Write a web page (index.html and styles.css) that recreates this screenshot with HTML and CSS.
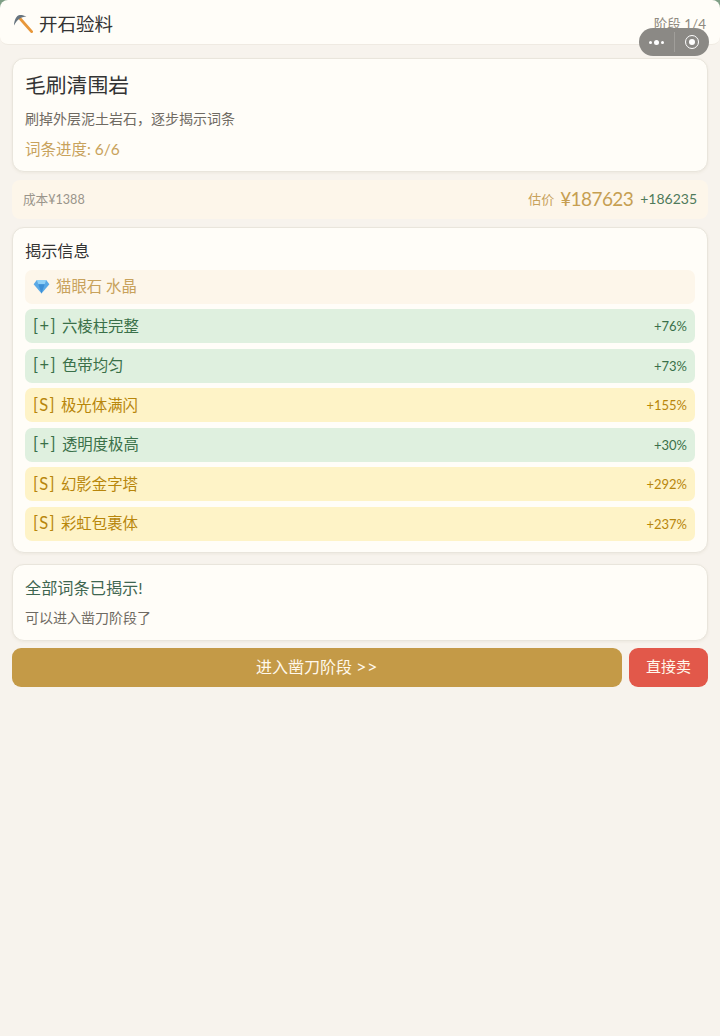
FILE: index.html
```html
<!DOCTYPE html>
<html lang="zh-CN">
<head>
<meta charset="utf-8">
<title>开石验料</title>
<link rel="stylesheet" href="styles.css">
</head>
<body>
<div class="page">
  <header class="topbar">
    <div class="brand">
      <svg class="pick" viewBox="0 0 20 20" aria-hidden="true">
        <path d="M7 5.5 L18.6 18.6" stroke="#e8973a" stroke-width="2.8" stroke-linecap="round" fill="none"/>
        <path d="M1 12.4 C1 7 3.6 2.6 6 2.2 C8.4 1.8 11 2.4 13.4 3.8 C10.6 3.8 8.4 4.4 6.8 5.6 C4.6 7 2.6 9.4 1 12.4 Z" fill="#67747f"/>
      </svg>
      <span>开石验料</span>
    </div>
    <div class="stage">阶段 1/4</div>
  </header>
  <div class="capsule" aria-hidden="true">
    <span class="dots"><i></i><b></b><i></i></span>
    <span class="sep"></span>
    <span class="ring"></span>
  </div>

  <main class="content">
    <section class="card intro">
      <h1>毛刷清围岩</h1>
      <p class="desc">刷掉外层泥土岩石，逐步揭示词条</p>
      <p class="progress">词条进度: 6/6</p>
    </section>

    <section class="pricebar">
      <span class="cost">成本¥1388</span>
      <div class="prices">
        <span class="est-label">估价</span>
        <span class="est">¥187623</span>
        <span class="gain">+186235</span>
      </div>
    </section>

    <section class="card reveal">
      <h2>揭示信息</h2>
      <div class="rows">
        <div class="row base">
          <svg class="gem" viewBox="0 0 18 16" aria-hidden="true">
            <path d="M4 1 H14 L17.4 5.6 L9 15.4 L.6 5.6 Z" fill="#5aa9e6"/>
            <path d="M4 1 H14 L12.4 5.6 H5.6 Z" fill="#8fd0f7"/>
            <path d="M5.6 5.6 H12.4 L9 15.4 Z" fill="#3d8fd6"/>
          </svg>
          <span>猫眼石 水晶</span>
        </div>
        <div class="row plus"><span class="name"><em>[+]</em>六棱柱完整</span><span class="pct">+76%</span></div>
        <div class="row plus"><span class="name"><em>[+]</em>色带均匀</span><span class="pct">+73%</span></div>
        <div class="row rare"><span class="name"><em>[S]</em>极光体满闪</span><span class="pct">+155%</span></div>
        <div class="row plus"><span class="name"><em>[+]</em>透明度极高</span><span class="pct">+30%</span></div>
        <div class="row rare"><span class="name"><em>[S]</em>幻影金字塔</span><span class="pct">+292%</span></div>
        <div class="row rare"><span class="name"><em>[S]</em>彩虹包裹体</span><span class="pct">+237%</span></div>
      </div>
    </section>

    <section class="card done">
      <h3>全部词条已揭示!</h3>
      <p class="desc">可以进入凿刀阶段了</p>
    </section>

    <div class="actions">
      <button class="btn next">进入凿刀阶段 <span class="arrows">&gt;&gt;</span></button>
      <button class="btn sell">直接卖</button>
    </div>
  </main>
</div>
</body>
</html>
```
FILE: styles.css
```css
* { box-sizing: border-box; }
html { background: #f7f3ed; }
body {
  margin: 0;
  font-family: "Lato", "Noto Sans CJK SC", "Noto Sans", sans-serif;
  color: #333;
}
.page {
  position: relative;
  min-height: 1036px;
  background: linear-gradient(#7f9f86 0 12px, #f7f3ed 12px);
}
.topbar {
  height: 45px;
  padding: 2px 8px 0 13px;
  display: flex;
  align-items: center;
  justify-content: space-between;
  background: #fffdf8;
  border-bottom: 1px solid #efeae2;
  border-radius: 8px;
}
.brand {
  display: flex;
  align-items: center;
  gap: 6px;
  font-size: 18.5px;
  color: #333;
}
.pick { width: 20px; height: 20px; display: block; }
.stage {
  font-size: 13.5px;
  color: #8f8a80;
  padding: 0 6px 0 0;
  margin-top: -1px;
}
.capsule {
  position: absolute;
  left: 639px;
  top: 28px;
  width: 70px;
  height: 28px;
  border-radius: 14px;
  background: #8b8985;
  display: flex;
  align-items: center;
}
.dots { width: 35px; display: flex; justify-content: center; align-items: center; gap: 2px; }
.dots i { width: 3px; height: 3px; border-radius: 50%; background: #fff; }
.dots b { width: 5px; height: 5px; border-radius: 50%; background: #fff; }
.sep { width: 1px; height: 20px; background: #a09e9a; }
.ring {
  width: 14px; height: 14px; margin-left: 10px;
  border-radius: 50%;
  border: 1.5px solid #fff;
  display: flex; align-items: center; justify-content: center;
}
.ring::after { content: ""; width: 6px; height: 6px; border-radius: 50%; background: #fff; }
.content {
  padding: 13px 12px 0;
  display: flex;
  flex-direction: column;
}
.card {
  background: #fffdf8;
  border: 1px solid #e9e5dc;
  border-radius: 12px;
  padding: 0 12px;
  box-shadow: 0 1px 3px rgba(120,100,70,.08);
}
h1, h2, h3, p { margin: 0; font-weight: 400; }
.intro { height: 114px; padding-top: 11px; }
.intro h1 { font-size: 20.8px; line-height: 30px; color: #333; }
.desc { font-size: 14px; line-height: 20px; color: #6f6a62; }
.intro .desc { margin-top: 9px; }
.progress { margin-top: 10px; font-size: 15.5px; line-height: 20px; color: #c8a25c; }
.pricebar {
  margin-top: 8px;
  height: 39px;
  padding: 0 11px 2px;
  display: flex;
  align-items: center;
  justify-content: space-between;
  background: #fdf6ea;
  border-radius: 8px;
}
.cost { font-size: 12.6px; color: #9a958b; }
.prices { display: flex; align-items: center; }
.est-label { font-size: 13px; color: #c8a25c; margin-right: 6px; }
.est { font-size: 19px; letter-spacing: -.6px; color: #c69f52; margin-right: 7px; }
.gain { font-size: 14px; color: #4f7a5a; }
.reveal { margin-top: 8px; height: 326px; padding-top: 12px; }
.reveal h2 { font-size: 16.2px; line-height: 22px; color: #333; }
.rows { margin-top: 7.8px; display: flex; flex-direction: column; gap: 5.5px; }
.row {
  height: 34px;
  padding: 0 8px 3px;
  border-radius: 7px;
  display: flex;
  align-items: center;
  justify-content: space-between;
  font-size: 15.4px;
}
.row .name em { font-style: normal; font-size: 16.5px; margin-right: 5px; letter-spacing: 1.4px; }
.pct { font-size: 13px; margin-top: 3px; }
.base { justify-content: flex-start; gap: 6px; background: #fdf6ea; color: #c8a25c; }
.gem { width: 17px; height: 15px; display: block; margin-top: 3px; }
.plus { background: #dff0df; color: #3a7049; }
.rare { background: #fef3c7; color: #b8860b; }
.done { margin-top: 11px; height: 77px; padding-top: 12px; }
.done h3 { font-size: 16.2px; line-height: 22px; color: #3f6650; }
.done .desc { margin-top: 9px; }
.actions { margin-top: 7px; display: flex; gap: 7px; }
.btn {
  height: 39px;
  border: 0;
  border-radius: 9px;
  color: #fff8ec;
  font: inherit;
  font-size: 16px;
  padding: 0 0 4px;
}
.arrows { font-size: 18px; letter-spacing: .6px; }
.next { flex: 1; background: #c49a47; }
.sell { width: 79px; background: #e2584a; font-size: 15px; }
```
